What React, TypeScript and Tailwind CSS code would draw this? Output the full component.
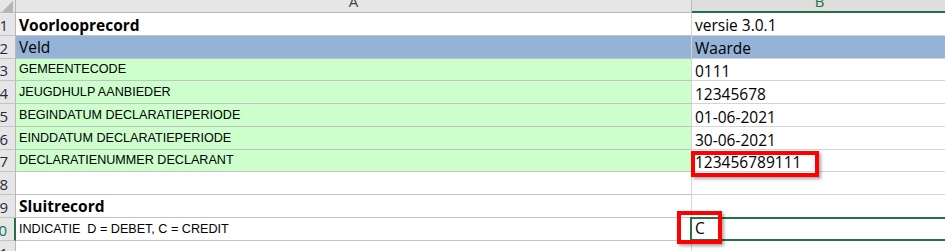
import React from "react";

type Row = {
  n: string;
  h: number;
  a: string;
  aKind: "title" | "head" | "label" | "labelSmall" | "empty";
  aBg: string;
  b: string;
  bBg: string;
  bPb: string;
  aPb: string;
  sel?: boolean;
};

const rows: Row[] = [
  { n: "1", h: 23, a: "Voorlooprecord", aKind: "title", aBg: "bg-white", b: "versie 3.0.1", bBg: "bg-white", bPb: "pb-[2px]", aPb: "pb-[2px]" },
  { n: "2", h: 23, a: "Veld", aKind: "head", aBg: "bg-[#95b3d7]", b: "Waarde", bBg: "bg-[#95b3d7]", bPb: "pb-[2px]", aPb: "pb-[3px]" },
  { n: "3", h: 22, a: "GEMEENTECODE", aKind: "label", aBg: "bg-[#ccffcc]", b: "0111", bBg: "bg-white", bPb: "pb-[1px]", aPb: "pb-[4px]" },
  { n: "4", h: 23, a: "JEUGDHULP AANBIEDER", aKind: "label", aBg: "bg-[#ccffcc]", b: "12345678", bBg: "bg-white", bPb: "pb-[1px]", aPb: "pb-[4px]" },
  { n: "5", h: 23, a: "BEGINDATUM DECLARATIEPERIODE", aKind: "label", aBg: "bg-[#ccffcc]", b: "01-06-2021", bBg: "bg-white", bPb: "pb-[1px]", aPb: "pb-[4px]" },
  { n: "6", h: 23, a: "EINDDATUM DECLARATIEPERIODE", aKind: "label", aBg: "bg-[#ccffcc]", b: "30-06-2021", bBg: "bg-white", bPb: "pb-[1px]", aPb: "pb-[4px]" },
  { n: "7", h: 22, a: "DECLARATIENUMMER DECLARANT", aKind: "label", aBg: "bg-[#ccffcc]", b: "123456789111", bBg: "bg-white", bPb: "pb-[1px]", aPb: "pb-[4px]" },
  { n: "8", h: 23, a: "", aKind: "empty", aBg: "bg-white", b: "", bBg: "bg-white", bPb: "pb-[1px]", aPb: "pb-[4px]" },
  { n: "9", h: 23, a: "Sluitrecord", aKind: "title", aBg: "bg-white", b: "", bBg: "bg-white", bPb: "pb-[1px]", aPb: "pb-[3px]" },
  { n: "10", h: 23, a: "INDICATIE  D = DEBET, C = CREDIT", aKind: "labelSmall", aBg: "bg-white", b: "C", bBg: "bg-white", bPb: "pb-[4px]", aPb: "pb-[4px]", sel: true },
  { n: "11", h: 23, a: "", aKind: "empty", aBg: "bg-white", b: "", bBg: "bg-white", bPb: "pb-[1px]", aPb: "pb-[4px]" },
];

const calibri = { fontFamily: '"Open Sans", "Noto Sans", sans-serif' };

function ACell({ r }: { r: Row }) {
  let cls = "";
  if (r.aKind === "title") cls = "font-bold text-[15.5px] leading-[16px] text-black";
  else if (r.aKind === "head") cls = "text-[15.5px] leading-[16px] text-black";
  else if (r.aKind === "label") cls = "text-[12.6px] leading-[14px] text-black";
  else if (r.aKind === "labelSmall") cls = "text-[12.6px] leading-[14px] text-black";
  const isArial = r.aKind === "label" || r.aKind === "labelSmall";
  return (
    <div
      className={`w-[676px] shrink-0 flex items-end pl-[3px] ${r.aPb} border-b border-r border-b-[#c3c3c3] border-r-[#d4d4d4] ${r.aBg}`}
    >
      <span
        className={`${cls} whitespace-pre`}
        style={isArial ? { fontFamily: '"Liberation Sans", Arial, sans-serif' } : calibri}
      >
        {r.a}
      </span>
    </div>
  );
}

export default function App() {
  return (
    <div className="relative w-[945px] h-[251px] overflow-hidden bg-white">
      {/* column headers */}
      <div className="flex h-[13px]">
        <div className="w-[16px] shrink-0 bg-[#e6e6e6] border-r border-b border-[#b8b8b8] relative overflow-hidden">
          <svg width="16" height="13" className="absolute left-0 top-0">
            <polygon points="2,12 13,12 13,1" fill="#b4b4b4" />
          </svg>
        </div>
        <div className="w-[676px] shrink-0 bg-[#e6e6e6] border-r border-b border-[#b8b8b8] overflow-hidden flex justify-center">
          <span className="text-[15px] leading-[15px] -mt-[6px] text-[#444]" style={calibri}>
            A
          </span>
        </div>
        <div className="flex-1 bg-[#dedede] border-b-2 border-[#217346] overflow-hidden flex justify-center">
          <span className="text-[15px] leading-[15px] -mt-[6px] text-[#217346] pl-[2px]" style={calibri}>
            B
          </span>
        </div>
      </div>

      {rows.map((r) => (
        <div key={r.n} className="flex" style={{ height: r.h }}>
          <div
            className={`w-[16px] shrink-0 bg-[#e6e6e6] border-b border-[#c3c3c3] flex items-end justify-end overflow-hidden ${
              r.sel ? "border-r-2 border-r-[#217346]" : "border-r border-r-[#b8b8b8]"
            }`}
          >
            <span
              className={`text-[15px] leading-[16px] pb-[2px] mr-[7px] whitespace-nowrap ${
                r.sel ? "text-[#217346]" : "text-[#1f2a44]"
              }`}
              style={calibri}
            >
              {r.n}
            </span>
          </div>
          <ACell r={r} />
          <div
            className={`flex-1 flex items-end pl-[3px] ${r.bPb} border-b border-[#d4d4d4] ${r.bBg} relative`}
          >
            <span className="text-[15.5px] leading-[16px] text-black whitespace-nowrap" style={calibri}>
              {r.b}
            </span>
            {r.sel && (
              <div className="absolute left-[-2px] top-[-1px] right-[-2px] bottom-[-1px] border-2 border-[#217346]" />
            )}
          </div>
        </div>
      ))}

      {/* annotation boxes */}
      <div className="absolute left-[691px] top-[151px] w-[128px] h-[26px] border-4 border-[#ff0000] shadow-[2px_2px_3px_rgba(0,0,0,0.35)]" />
      <div className="absolute left-[677px] top-[211px] w-[45px] h-[33px] border-4 border-[#ff0000] shadow-[2px_2px_3px_rgba(0,0,0,0.35)]" />
    </div>
  );
}
